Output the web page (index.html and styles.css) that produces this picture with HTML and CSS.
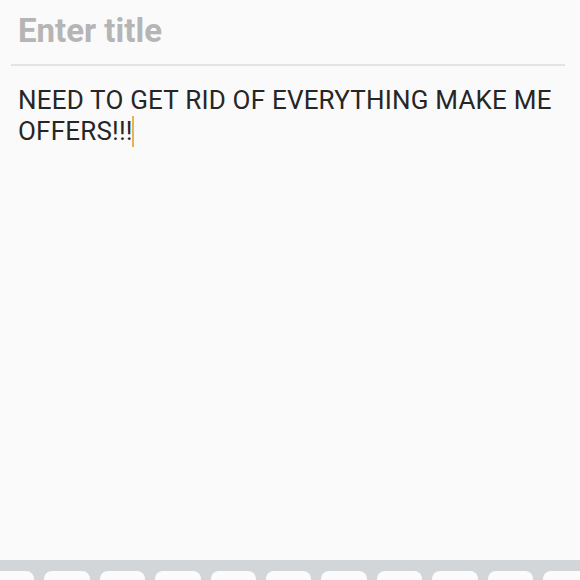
FILE: index.html
```html
<!DOCTYPE html>
<html lang="en">
<head>
    <meta charset="utf-8">
    <link rel="stylesheet" href="styles.css">
</head>
<body>
    <div class="editor">
        <div class="titulo">Enter title</div>
        <div class="linea"></div>
        <div class="nota">NEED TO GET RID OF EVERYTHING MAKE ME OFFERS!!!<span class="cursor"></span></div>
    </div>
    <div class="teclado">
        <div class="tecla"></div>
        <div class="tecla"></div>
        <div class="tecla"></div>
        <div class="tecla"></div>
        <div class="tecla"></div>
        <div class="tecla"></div>
        <div class="tecla"></div>
        <div class="tecla"></div>
        <div class="tecla"></div>
        <div class="tecla"></div>
        <div class="tecla"></div>
    </div>
</body>
</html>
```
FILE: styles.css
```css
body{
    margin: 0;
    padding: 0;
    width: 580px;
    height: 580px;
    overflow: hidden;
    background-color: #fafafa;
    font-family: Roboto, sans-serif;
    display: flex;
    flex-direction: column;
}
.editor{
    flex: 1;
    display: flex;
    flex-direction: column;
}
.titulo{
    padding: 11px 18px 0 18px;
    height: 40px;
    font-size: 33px;
    font-weight: bold;
    color: #b5b5b5;
    line-height: 40px;
}
.linea{
    margin: 13px 15px 0 11px;
    height: 2px;
    background-color: #e3e3e3;
}
.nota{
    padding: 19px 18px 0 18px;
    font-size: 26px;
    letter-spacing: 0.2px;
    line-height: 31px;
    color: #262626;
}
.cursor{
    display: inline-block;
    width: 2px;
    height: 31px;
    margin-left: -1px;
    background-color: #e9b44c;
    vertical-align: -7px;
}
.teclado{
    height: 20px;
    background-color: #d3d6d9;
    display: flex;
    gap: 10px;
    padding: 11px 0 0 0;
    margin-left: -11px;
    box-sizing: border-box;
}
.tecla{
    flex: 0 0 45.4px;
    height: 20px;
    background-color: #fbfbfb;
    border-radius: 8px 8px 0 0;
}
```
